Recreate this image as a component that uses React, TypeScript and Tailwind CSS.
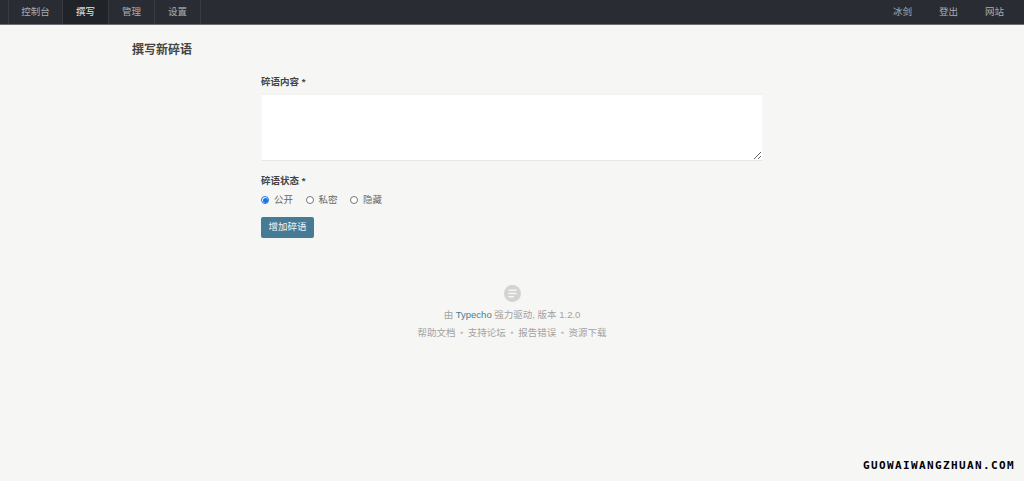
const cjk = 'font-["Liberation_Sans","Noto_Sans_CJK_SC",sans-serif]';

const NavItem = ({ label, active, first }: { label: string; active?: boolean; first?: boolean }) => (
  <a className={`flex h-full items-center justify-center border-r border-[#383d45] ${first ? 'w-[54px]' : 'w-[46px]'} ${active ? 'bg-[#202328] text-[#ececea]' : 'text-[#a9acaf]'}`}>
    {label}
  </a>
);

const RadioOption = ({ label, checked }: { label: string; checked?: boolean }) => (
  <label className="flex items-center gap-[5px]">
    {checked ? (
      <span className="flex h-[8px] w-[8px] items-center justify-center rounded-full border border-[#1a73e8] bg-white">
        <span className="h-[5px] w-[5px] rounded-full bg-[#1a73e8]" />
      </span>
    ) : (
      <span className="h-[8px] w-[8px] rounded-full border border-[#777] bg-white" />
    )}
    <span>{label}</span>
  </label>
);

export default function App() {
  return (
    <div className={`${cjk} relative flex h-[481px] flex-col overflow-hidden bg-[#f6f6f4] text-[9.5px] text-[#444]`}>
      <nav className="flex h-[25px] items-stretch justify-between border-b border-[#6b6e72] bg-[#292d33]">
        <div className="flex items-stretch pl-[8px]">
          <div className="border-l border-[#383d45]" />
          <NavItem label="控制台" first />
          <NavItem label="撰写" active />
          <NavItem label="管理" />
          <NavItem label="设置" />
        </div>
        <div className="flex items-center gap-[27px] pr-[20px] text-[#a9acaf]">
          <a>冰剑</a>
          <a>登出</a>
          <a>网站</a>
        </div>
      </nav>

      <h2 className="mt-[17px] ml-[132px] text-[12px] leading-[17px] font-bold text-[#444]">撰写新碎语</h2>

      <form className="mt-[16px] ml-[261px] flex w-[502px] flex-col">
        <label className="text-[9.5px] leading-[14px] font-bold">碎语内容 *</label>
        <textarea className="mt-[5px] h-[67px] w-full border border-x-[#f8f8f7] border-t-[#f1f1ef] border-b-[#e6e6e4] bg-white outline-none" />

        <label className="mt-[13px] text-[9.5px] leading-[14px] font-bold">碎语状态 *</label>
        <div className="mt-[5px] flex h-[14px] items-center gap-[12.5px] text-[#666]">
          <RadioOption label="公开" checked />
          <RadioOption label="私密" />
          <RadioOption label="隐藏" />
        </div>

        <button type="button" className="mt-[10px] h-[21px] w-[53px] rounded-[2px] bg-[#467b96] text-[9.5px] text-[#f0f4f6]">
          增加碎语
        </button>
      </form>

      <footer className="mt-[47px] flex flex-col items-center text-[#a3a3a3]">
        <svg width="17" height="17" viewBox="0 0 17 17" className="ml-[1px]">
          <circle cx="8.5" cy="8.5" r="8.5" fill="#d3d3d1" />
          <path d="M4.5 5.2h8M4.5 8.5h8M4.5 11.8h5.5" stroke="#f6f6f4" strokeWidth="1.4" />
        </svg>
        <p className="mt-[6px] leading-[14px]">
          由 <a className="text-[#467b96]">Typecho</a> 强力驱动, 版本 1.2.0
        </p>
        <p className="mt-[4px] flex gap-[4.5px] leading-[14px]">
          <a>帮助文档</a>
          <span className="text-[#c4c4c4]">•</span>
          <a>支持论坛</a>
          <span className="text-[#c4c4c4]">•</span>
          <a>报告错误</a>
          <span className="text-[#c4c4c4]">•</span>
          <a>资源下载</a>
        </p>
      </footer>

      {/* watermark sits over the page corner */}
      <span className='absolute top-[459px] right-[9px] font-["DejaVu_Sans_Mono",monospace] text-[11px] leading-[14px] font-bold tracking-[1.38px] text-black'>
        GUOWAIWANGZHUAN.COM
      </span>
    </div>
  );
}
